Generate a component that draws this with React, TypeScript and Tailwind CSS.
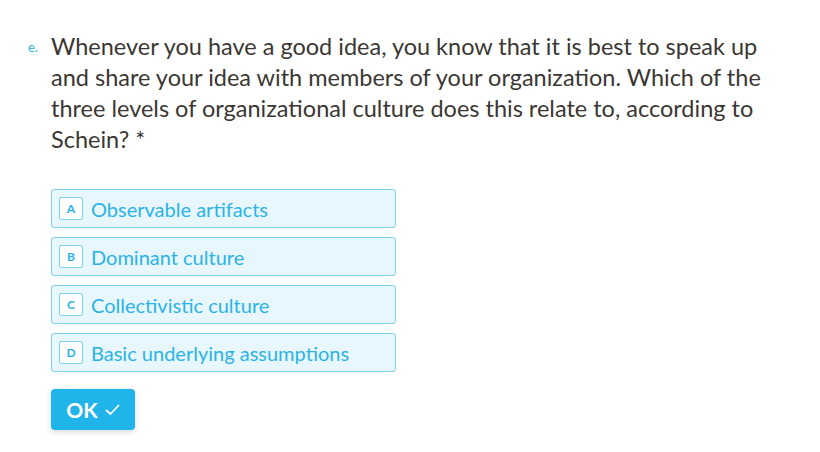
import React from "react";

const options = [
  { k: "A", t: "Observable artifacts" },
  { k: "B", t: "Dominant culture" },
  { k: "C", t: "Collectivistic culture" },
  { k: "D", t: "Basic underlying assumptions" },
];

export default function App() {
  return (
    <div className="w-[820px] h-[452px] bg-white" style={{ fontFamily: "Lato, 'Open Sans', sans-serif" }}>
      <div className="flex pt-[31px] pl-[28px]">
        <div className="w-[23px] text-[13px] text-[#2bb3e8] leading-[31px] pt-[1px]">e.</div>
        <div className="w-[725px]">
          <p className="text-[23.5px] leading-[31px] text-[#3b3733]">
            Whenever you have a good idea, you know that it is best to speak up and share your idea with members of your organization. Which of the three levels of organizational culture does this relate to, according to Schein? *
          </p>
          <div className="mt-[34px] flex flex-col gap-[9px] w-[345px]">
            {options.map((o) => (
              <div
                key={o.k}
                className="h-[39px] rounded-[3px] border border-[#7dd1f3] bg-[#e8f7fd] flex items-center pl-[7px]"
              >
                <div className="w-[24px] h-[23px] bg-white border border-[#7dd1f3] rounded-[2px] flex items-center justify-center text-[12px] font-bold text-[#2bb3e8]">
                  {o.k}
                </div>
                <span className="ml-[8px] text-[20px] text-[#2bb3e8]">{o.t}</span>
              </div>
            ))}
          </div>
          <button className="mt-[17px] w-[84px] h-[41px] rounded-[4px] bg-[#1fb4ea] shadow-[0_2px_6px_rgba(0,0,0,0.15)] flex items-center justify-center gap-[7px] text-white">
            <span className="text-[21px] font-bold">OK</span>
            <svg width="15" height="12" viewBox="0 0 15 12" fill="none">
              <path d="M1.5 6.5 L5.5 10 L13.5 1.5" stroke="white" strokeWidth="1.8" strokeLinecap="round" strokeLinejoin="round" />
            </svg>
          </button>
        </div>
      </div>
    </div>
  );
}
